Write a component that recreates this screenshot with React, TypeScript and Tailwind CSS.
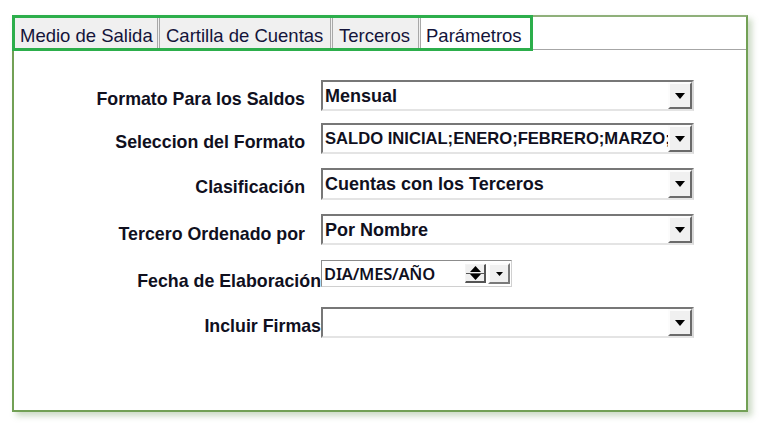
const ARIAL = { fontFamily: '"Liberation Sans", Arial, sans-serif' }

function Caret({ small = false }: { small?: boolean }) {
  return small ? (
    <svg width="7" height="4" viewBox="0 0 7 4">
      <path d="M0 0h7L3.5 4z" fill="#000" />
    </svg>
  ) : (
    <svg width="10" height="6" viewBox="0 0 10 6">
      <path d="M0 0h10L5 6z" fill="#000" />
    </svg>
  )
}

function DropButton() {
  return (
    <div className="w-[24px] shrink-0 self-stretch bg-[#f0f0f0] border-2 border-t-[#fcfcfc] border-l-[#fcfcfc] border-b-[#6a6a6a] border-r-[#6a6a6a] flex items-center justify-center">
      <Caret />
    </div>
  )
}

function Select({ value, h, size = 'text-[18px]' }: { value: string; h: string; size?: string }) {
  return (
    <div
      className={`w-[373px] ${h} flex bg-white border-2 border-t-[#777] border-l-[#777] border-b-[#e4e4e4] border-r-[#d8d8d8]`}
    >
      <div
        className={`flex-1 min-w-0 overflow-hidden whitespace-nowrap pl-[2px] flex items-center ${size} leading-[22px] font-bold text-[#10101e]`}
        style={ARIAL}
      >
        {value}
      </div>
      <DropButton />
    </div>
  )
}

function DateBox() {
  return (
    <div className="w-[191px] h-[27px] flex items-stretch bg-white border border-t-[#8c8c8c] border-l-[#8c8c8c] border-b-[#d0d0d0] border-r-[#d0d0d0]">
      <div
        className="flex-1 flex items-center pl-[2px] text-[16.5px] leading-[20px] font-semibold text-[#10101e] tracking-[-0.2px]"
        style={{ fontFamily: '"Noto Sans", "Open Sans", sans-serif' }}
      >
        DIA/MES/AÑO
      </div>
      <div className="w-[21px] my-[3px] flex flex-col border border-t-[#f4f4f4] border-l-[#f4f4f4] border-b-[#555] border-r-[#555] border-b-2 border-r-2 bg-[#f0f0f0]">
        <div className="flex-1 flex items-center justify-center border-b border-[#555]">
          <svg width="11" height="6" viewBox="0 0 11 6">
            <path d="M0 6h11L5.5 0z" fill="#000" />
          </svg>
        </div>
        <div className="flex-1 flex items-center justify-center">
          <svg width="11" height="6" viewBox="0 0 11 6">
            <path d="M0 0h11L5.5 6z" fill="#000" />
          </svg>
        </div>
      </div>
      <div className="w-[22px] ml-[2px] my-[2px] mr-[1px] bg-[#f0f0f0] border-2 border-t-[#fcfcfc] border-l-[#fcfcfc] border-b-[#7a7a7a] border-r-[#7a7a7a] flex items-center justify-center">
        <Caret small />
      </div>
    </div>
  )
}

const TABS = [
  { label: 'Medio de Salida', w: 'w-[145px] pl-[5px]', active: false },
  { label: 'Cartilla de Cuentas', w: 'w-[173px] pl-[6px]', active: false },
  { label: 'Terceros', w: 'w-[88px] pl-[6px]', active: false },
  { label: 'Parámetros', w: 'w-[109px] pl-[5px]', active: true },
]

function Label({ text, pt, pr = 'pr-[16px]' }: { text: string; pt: string; pr?: string }) {
  return (
    <div
      className={`w-[307px] shrink-0 text-right whitespace-nowrap text-[17.8px] leading-[20px] font-bold text-[#10101e] ${pt} ${pr}`}
      style={ARIAL}
    >
      {text}
    </div>
  )
}

export default function App() {
  return (
    <div className="w-[764px] h-[433px] bg-white pl-[12px] pt-[15px]">
      <div className="w-[736px] h-[397px] border-2 border-[#72a055] border-t-[#8fb07a] shadow-[4px_4px_6px_rgba(110,150,90,0.35)] flex flex-col">
        {/* tab strip */}
        <div className="flex h-[33px] shrink-0">
          <div className="-ml-[2px] -mt-[2px] h-[36px] flex border-[3px] border-[#2cae4b] bg-white">
            {TABS.map((t, i) => (
              <div
                key={t.label}
                className={`${t.w} h-full flex items-center pt-[5px] text-[18.5px] leading-[22px] text-[#14143a] ${
                  t.active ? 'bg-white' : 'bg-[#f0f0f0]'
                } ${i < TABS.length - 1 ? 'border-r-[3px] border-double border-[#a8a8a8]' : ''}`}
                style={ARIAL}
              >
                {t.label}
              </div>
            ))}
          </div>
          <div className="flex-1 border-b border-[#a6a6a6]" />
        </div>

        {/* form */}
        <div className="pt-[30px] flex flex-col">
          <div className="flex items-start h-[31px]">
            <Label text="Formato Para los Saldos" pt="pt-[9px]" />
            <Select value="Mensual" h="h-[31px]" />
          </div>
          <div className="flex items-start h-[31px] mt-[12px]">
            <Label text="Seleccion del Formato" pt="pt-[9px]" />
            <Select
              value="SALDO INICIAL;ENERO;FEBRERO;MARZO;ABRIL"
              h="h-[31px]"
              size="text-[16.6px]"
            />
          </div>
          <div className="flex items-start h-[32px] mt-[14px]">
            <Label text="Clasificación" pt="pt-[9px]" />
            <Select value="Cuentas con los Terceros" h="h-[32px]" />
          </div>
          <div className="flex items-start h-[31px] mt-[14px]">
            <Label text="Tercero Ordenado por" pt="pt-[10px]" />
            <Select value="Por Nombre" h="h-[31px]" />
          </div>
          <div className="flex items-start h-[27px] mt-[15px]">
            <Label text="Fecha de Elaboración" pt="pt-[11px]" pr="pr-0" />
            <DateBox />
          </div>
          <div className="flex items-start h-[31px] mt-[20px]">
            <Label text="Incluir Firmas" pt="pt-[9px]" pr="pr-0" />
            <Select value="" h="h-[31px]" />
          </div>
        </div>
      </div>
    </div>
  )
}
